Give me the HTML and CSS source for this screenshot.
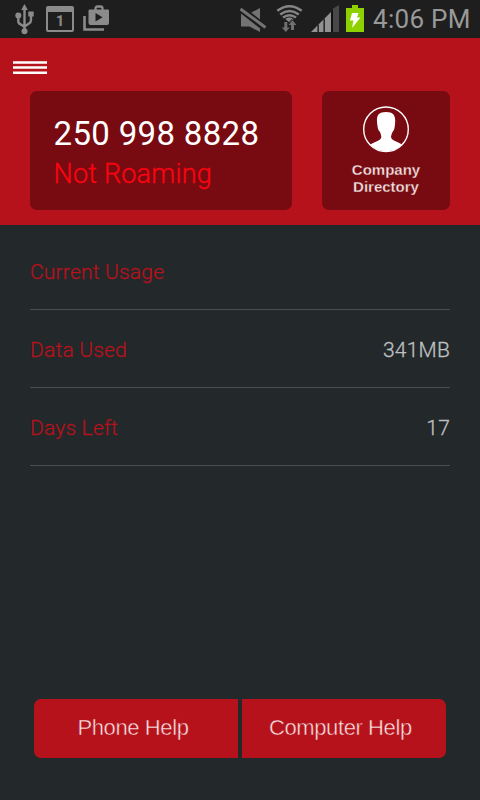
FILE: index.html
```html
<!DOCTYPE html>
<html lang="en">
<head>
<meta charset="utf-8">
<title>Usage</title>
<link rel="stylesheet" href="styles.css">
</head>
<body>
<div class="status">
  <svg class="usb" width="22" height="32" viewBox="0 0 22 32" fill="none" stroke="#8b8b8b" stroke-width="2.4">
    <path d="M10.500 5V28M4.300 12v6q0 2.500 2 3.200l4.200 2.500M17 10v7q0 2.500-2 3.500l-4.500 3"/>
    <g fill="#8b8b8b" stroke="none"><path d="M10.500 1l3.300 6H7.200z"/><circle cx="4.300" cy="12.500" r="3"/><circle cx="10.500" cy="28.300" r="3"/><path d="M14.300 8.500h5.400v5h-5.400z"/></g>
  </svg>
  <div class="calendar">1</div>
  <svg class="play" width="27" height="28" viewBox="0 0 27 28">
    <path d="M1.500 12v13.500h19.500" fill="none" stroke="#8b8b8b" stroke-width="2.600"/>
    <path d="M12.500 6V4.500q0-2 2-2h3q2 0 2 2V6" fill="none" stroke="#8b8b8b" stroke-width="2.300"/>
    <path fill="#8b8b8b" fill-rule="evenodd" d="M7 5.500h18q1 0 1 1V19q0 2-2 2H7.500q-2 0-2-2V6.500q0-1 1.500-1zM12.500 9v8.500l7-4.200z"/>
  </svg>
  <svg class="indicators" width="130" height="38" viewBox="0 0 130 38">
    <path fill="#737373" d="M3 13.500h8.500L22 8v24l-10.500-5.500H3z"/>
    <path d="M1 7.500L28.500 29" stroke="#1e1e1e" stroke-width="7"/>
    <path d="M2.500 9L27.500 27.500" stroke="#737373" stroke-width="3"/>
    <g fill="none" stroke="#858585" stroke-width="2.500">
      <path d="M39.300 10.800q12.200-9 24.400 0M42.200 14.400q9.300-6.800 18.600 0M45 17.500q6.500-4.600 13 0"/>
      <path d="M51.500 22.500l-4.200-3.600q4.200-2.600 8.400 0z" fill="#858585" stroke="none"/>
    </g>
    <path d="M54.600 18.500l-5 6" stroke="#1e1e1e" stroke-width="1"/>
    <path fill="#6f6f6f" d="M46.300 22h3v5.500h2.500L47.800 32l-4-4.500h2.500zM53 30v-5h-2.500l4-4.700 4 4.700H56v5z"/>
    <path fill="#484848" d="M95 8.500l6-3.500v27h-6z"/>
    <path fill="#929292" d="M73 32l20.500-20.500V32z"/>
    <path fill="#111" d="M79.500 25.500l1.300-1.300V32h-1.300zM85.500 19.500l1.300-1.300V32h-1.300zM93 12l2-2v22h-2z"/>
    <path fill="#8fd000" d="M108 8h6V5h6v3h6v24h-18z"/>
    <path fill="#fff" d="M114 13h6.500l-1.500 4.500h3.500L114 28l1.500-7.500H112z"/>
  </svg>
  <span class="time">4:06 PM</span>
</div>
<header class="header">
  <svg class="menu" width="34" height="30" viewBox="0 0 34 30">
    <path d="M0 1.400h34M0 6.600h34M0 11.800h34" stroke="#fff" stroke-width="2.500"/>
  </svg>
  <div class="cards">
    <div class="phone">
      <div class="number">250 998 8828</div>
      <div class="roaming">Not Roaming</div>
    </div>
    <div class="directory">
      <svg width="48" height="48" viewBox="0 0 48 48">
        <circle cx="24" cy="24.300" r="22.300" fill="none" stroke="#fff" stroke-width="1.400"/>
        <path fill="#fff" d="M8.200 39.500q3.500-2 6.800-3.200c3-1.300 4.300-2.300 4.300-4.800q-.300-2-1.300-4.500c-1.500-1.500-2.300-3.500-2.500-6C14 12 15 7 24 7s10 5 8.800 14c-.300 2.500-.800 4.500-2.300 6q-1.200 2.500-1.500 4.500c0 2.500 1.500 3.500 4.500 4.800q3.500 1.200 6.500 3.200A22.300 22.300 0 0 1 8.200 39.500z"/>
      </svg>
      <div class="label">Company<br>Directory</div>
    </div>
  </div>
</header>
<main class="usage">
  <div class="row"><span>Current Usage</span></div>
  <div class="row"><span>Data Used</span><b>341MB</b></div>
  <div class="row"><span>Days Left</span><b>17</b></div>
</main>
<footer class="help">
  <div class="button left">Phone Help</div>
  <div class="button right">Computer Help</div>
</footer>
</body>
</html>
```
FILE: styles.css
```css
* { box-sizing: border-box; }
body {
  margin: 0; width: 480px; height: 800px; overflow: hidden;
  display: flex; flex-direction: column;
  background: #23282b; font-family: Roboto, sans-serif;
}
svg { display: block; flex: none; }
.status { height: 38px; background: #1e1e1e; display: flex; align-items: flex-start; flex: none; }
.usb { margin: 3px 0 0 14px; }
.calendar {
  width: 28px; height: 26px; margin: 6px 0 0 10px;
  border: 2px solid #8b8b8b; border-top-width: 6px; border-radius: 2px;
  color: #8b8b8b; font: bold 15px/19px Roboto, sans-serif; text-align: center;
}
.play { margin: 4px 0 0 9px; }
.indicators { margin-left: 128px; }
.time { margin-left: 5px; font-size: 26px; line-height: 38px; color: #999; white-space: nowrap; letter-spacing: .3px; }
.header { height: 187px; background: #b5121b; flex: none; padding: 23px 30px 0; }
.menu { margin-left: -17px; }
.cards { display: flex; justify-content: space-between; }
.phone, .directory { height: 119px; background: #780b11; border-radius: 7px; }
.phone { width: 262px; padding: 22px 0 0 23.5px; white-space: nowrap; }
.number { font-size: 33px; line-height: 41px; color: #fff; letter-spacing: .33px; }
.roaming { font-size: 27px; line-height: 40px; color: #fb0410; letter-spacing: .2px; font-weight: 300; -webkit-text-stroke: .3px #fb0410; }
.directory { width: 128px; padding-top: 14px; display: flex; flex-direction: column; align-items: center; }
.label { margin-top: 8px; font: bold 15px/17px "Liberation Sans", sans-serif; color: #f4e4e5; text-align: center; -webkit-text-stroke: .3px #780b11; }
.usage { margin: 7px 30px 0; flex: 1; }
.row {
  height: 78px; padding-top: 2px; border-bottom: 1px solid #4b4e50;
  display: flex; justify-content: space-between; align-items: center;
  font-size: 21px; letter-spacing: .2px; color: #b5121b;
  -webkit-text-stroke: .3px currentColor;
}
.row b { font-weight: 300; color: #bfc0c0; }
.row span { font-weight: 300; }
.help { display: flex; gap: 4px; margin: 0 34px 42px; }
.button {
  width: 204px; height: 59px; background: #b5121b; color: #ffe8e9;
  font: 22px/57px "Liberation Sans", sans-serif; white-space: nowrap;
  letter-spacing: -.4px; -webkit-text-stroke: .5px #b5121b;
}
.left { border-radius: 7px 0 0 7px; padding-left: 43.5px; }
.right { border-radius: 0 7px 7px 0; padding-left: 27px; }
```
